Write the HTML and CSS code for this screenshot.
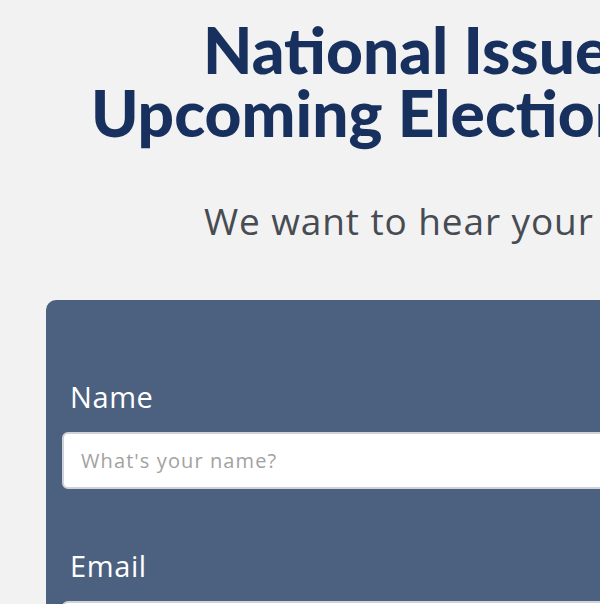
FILE: index.html
```html
<!DOCTYPE html>
<html lang="en">
<head>
<meta charset="utf-8">
<title>National Issues & the Upcoming Elections</title>
<link rel="stylesheet" href="styles.css">
</head>
<body>
<main class="page">
  <header class="hero">
    <h1 class="title">
      <span class="title-line line-1">National Issues &amp;</span>
      <span class="title-line line-2">Upcoming Elections</span>
    </h1>
    <p class="subtitle">We want to hear your thoughts</p>
  </header>
  <form class="card">
    <div class="field">
      <label class="label" for="name">Name</label>
      <input class="input" id="name" type="text" placeholder="What's your name?">
    </div>
    <div class="field">
      <label class="label" for="email">Email</label>
      <input class="input" id="email" type="email" placeholder="What's your email?">
    </div>
  </form>
</main>
</body>
</html>
```
FILE: styles.css
```css
html, body {
  margin: 0;
  padding: 0;
  background: #f2f2f2;
  overflow: hidden;
}
body {
  width: 600px;
  height: 604px;
  font-family: "Open Sans", "DejaVu Sans", sans-serif;
}
.page {
  width: 1000px;
}
.hero {
  padding-top: 18px;
}
.title {
  margin: 0;
  font-family: "Lato", sans-serif;
  font-weight: 900;
  font-size: 64px;
  line-height: 63px;
  color: #17305e;
  white-space: nowrap;
}
.title-line {
  display: block;
}
.line-1 {
  margin-left: 203px;
}
.line-2 {
  margin-left: 91px;
}
.subtitle {
  margin: 55px 0 0 204px;
  font-size: 37px;
  line-height: 44px;
  letter-spacing: 0.9px;
  color: #474b52;
  white-space: nowrap;
}
.card {
  margin: 57px 0 0 46px;
  width: 900px;
  background: #4c6080;
  border-radius: 10px;
  padding: 80px 16px 40px;
  display: flex;
  flex-direction: column;
  gap: 60px;
}
.field {
  display: flex;
  flex-direction: column;
  gap: 18px;
}
.label {
  margin-left: 8px;
  font-size: 29px;
  line-height: 34px;
  letter-spacing: 0.6px;
  color: #ffffff;
}
.input {
  box-sizing: border-box;
  height: 57px;
  width: 100%;
  border: 2px solid #cfd2d6;
  border-radius: 6px;
  background: #fff;
  padding: 0 17px;
  font-family: inherit;
  font-size: 20px;
  letter-spacing: 1.1px;
  color: #333;
}
.input::placeholder {
  color: #a2a2a2;
}
```
